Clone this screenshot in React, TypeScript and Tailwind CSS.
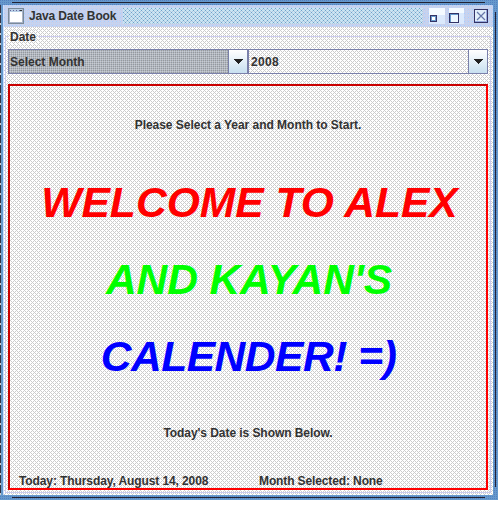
import React from "react";

// Two-tone ordered dither used by the panel background.
const dither =
  "bg-white bg-[image:conic-gradient(from_270deg_at_1px_1px,#ccc_25%,transparent_0),conic-gradient(from_270deg_at_1px_1px,#ccc_25%,transparent_0),conic-gradient(from_270deg_at_1px_1px,#ccc_25%,transparent_0)] bg-[size:2px_2px,4px_4px,4px_4px] bg-[position:1px_0px,0px_1px,2px_3px]";
const titleDither =
  "bg-[#c4d4f2] bg-[image:conic-gradient(from_270deg_at_1px_1px,#aaccff_25%,transparent_0),conic-gradient(from_270deg_at_1px_1px,#cccce4_25%,transparent_0)] bg-[size:4px_4px,2px_2px] bg-[position:0px_0px,1px_1px]";
const bumps =
  "bg-[#c8e6f4] bg-[image:conic-gradient(from_270deg_at_1px_1px,#6f9fc8_25%,transparent_0),conic-gradient(from_270deg_at_1px_1px,#6f9fc8_25%,transparent_0),conic-gradient(from_270deg_at_1px_1px,#b4c4dc_25%,transparent_0)] bg-[size:4px_4px,4px_4px,2px_2px] bg-[position:0px_0px,2px_2px,1px_1px]";
const selectedDither =
  "bg-[#acb6c4] bg-[image:conic-gradient(from_270deg_at_1px_1px,#999999_25%,transparent_0),conic-gradient(from_270deg_at_1px_1px,#cccccc_25%,transparent_0)] bg-[size:2px_2px,2px_2px] bg-[position:0px_0px,1px_1px]";
const frameDither =
  "bg-[#6699cc] bg-[image:conic-gradient(from_270deg_at_1px_1px,#5580c0_25%,transparent_0)] bg-[size:2px_2px]";
const label =
  "font-bold text-[12px] leading-[14px] text-[#333] whitespace-nowrap";
const banner =
  "flex h-[77px] items-center justify-center pt-px text-[42.6px] leading-none font-bold italic whitespace-nowrap";

function ArrowButton() {
  return (
    <span className="flex h-full w-[19px] shrink-0 items-center justify-center border-l border-[#7a80aa] bg-gradient-to-b from-white to-[#c8e0f0]">
      <svg width="10" height="5" viewBox="0 0 10 5" shapeRendering="crispEdges">
        <path d="M0 0h10L5 5z" fill="#222" />
      </svg>
    </span>
  );
}

function WindowIcon() {
  return (
    <svg width="16" height="16" viewBox="0 0 16 16" shapeRendering="crispEdges">
      <rect x="0.5" y="0.5" width="15" height="15" rx="1" fill="#fff" stroke="#7a8a99" />
      <path d="M1.5 1v14M1 14.5h14M14.5 1v14" stroke="#aab4c8" />
      <path d="M2 2.5h12" stroke="#b8cfe5" strokeWidth="3" />
      <path d="M2 2.5h10" stroke="#666699" strokeDasharray="1 2" />
      <path d="M12 2.5h2" stroke="#333" />
    </svg>
  );
}

function WindowControls() {
  return (
    <svg width="64" height="16" viewBox="0 0 64 16" shapeRendering="crispEdges">
      <path d="M0 0h16v16H0zM20 0h15v16H20z" fill="#dbe9fc" />
      <path d="M0 0h16v7H0zM20 0h15v5H20z" fill="#f4faff" />
      <rect x="1" y="7" width="7" height="7" fill="#333366" />
      <rect x="2" y="8" width="5" height="5" fill="#6699cc" />
      <rect x="3" y="9" width="3" height="3" fill="#fff" />
      <rect x="20.5" y="5.5" width="9" height="9" fill="#eef8ff" stroke="#333366" />
      <path d="M21 6.5h8M21.5 7v7" stroke="#6699cc" />
      <rect x="45.5" y="1.5" width="13" height="13" fill="#e2eefa" stroke="#333366" />
      <path d="M46 13.5h12M57.5 2v12" stroke="#99aadd" />
      <path
        d="M48 4l8 8M56 4l-8 8"
        stroke="#6677aa"
        strokeWidth="1.2"
        shapeRendering="geometricPrecision"
      />
    </svg>
  );
}

export default function App() {
  return (
    <div className="h-[509px] w-[499px] overflow-hidden bg-white font-['Liberation_Sans',Arial,sans-serif]">
      <div className={"flex h-[500px] w-[498px] flex-col " + frameDither}>
        <div className="h-[5px] shrink-0 pt-[2px]">
          <div className="mr-[13px] ml-[12px] h-px bg-[#222233]" />
        </div>
        <div className="flex h-[490px] shrink-0">
          <div className="flex w-[3px] shrink-0">
            <div className="w-px bg-[repeating-linear-gradient(#333344_0_8px,#ccc_8px_10px)]" />
            <div className="w-[2px] bg-[#6699cc]" />
          </div>
          <div className={"flex w-[490px] shrink-0 flex-col border-l border-[#ccddff] " + dither}>
            <header className={"flex h-[22px] shrink-0 items-center pl-[4px] " + titleDither}>
              <WindowIcon />
              <span className={label + " ml-[5px] w-[94px] tracking-[-0.15px]"}>
                Java Date Book
              </span>
              <div className={"mr-[6px] h-[16px] w-[300px] " + bumps} />
              <WindowControls />
            </header>
            <div className="relative mr-[2px] ml-px h-[466px] shrink-0 pt-[22px] pr-[3px] pl-[3px]">
              <div className="pointer-events-none absolute inset-x-0 top-[9px] bottom-0 border border-[#ccccee]" />
              <div
                className={label + " absolute top-[3px] left-[4px] h-[14px] pr-[2px] pl-px " + dither}
              >
                Date
              </div>
              <div className="flex h-[25px]">
                <div
                  className={"flex w-[240px] items-center border border-[#7a80aa] pl-px " + selectedDither}
                >
                  <span className={label + " grow"}>Select Month</span>
                  <ArrowButton />
                </div>
                <div className="flex w-[240px] items-center border border-[#7a80aa] pl-[2px]">
                  <span className={label + " grow tracking-[0.3px]"}>2008</span>
                  <ArrowButton />
                </div>
              </div>
              <main className="mt-[10px] h-[406px] w-[480px] border-2 border-t-[#c80000] border-r-[#ff0000] border-b-[#ff0000] border-l-[#c80000]">
                <div className={label + " flex h-[77px] items-center justify-center tracking-[-0.03px]"}>
                  Please Select a Year and Month to Start.
                </div>
                <h1 className={banner + " pl-[3px] text-[#ff0000]"}>WELCOME TO ALEX</h1>
                <h1 className={banner + " pl-[2px] tracking-[-0.15px] text-[#00ff00]"}>
                  AND KAYAN&apos;S
                </h1>
                <h1 className={banner + " pl-px tracking-[-0.5px] text-[#0000ff]"}>
                  CALENDER! =)
                </h1>
                <div className={label + " flex h-[77px] items-center justify-center tracking-[-0.06px]"}>
                  Today&apos;s Date is Shown Below.
                </div>
                <footer className="flex h-[17px] items-center pt-[3px] pl-[9px]">
                  <span className={label + " w-[240px] tracking-[-0.1px]"}>
                    Today: Thursday, August 14, 2008
                  </span>
                  <span className={label + " tracking-[-0.12px]"}>Month Selected: None</span>
                </footer>
              </main>
            </div>
          </div>
          <div className="flex w-[5px] shrink-0 pl-[2px]">
            <div className="mt-[7px] mb-[8px] w-px bg-[#222233]" />
          </div>
        </div>
        <div className="h-[5px] shrink-0 pt-[2px]">
          <div className="mr-[13px] ml-[12px] h-px bg-[#222233]" />
        </div>
      </div>
    </div>
  );
}
